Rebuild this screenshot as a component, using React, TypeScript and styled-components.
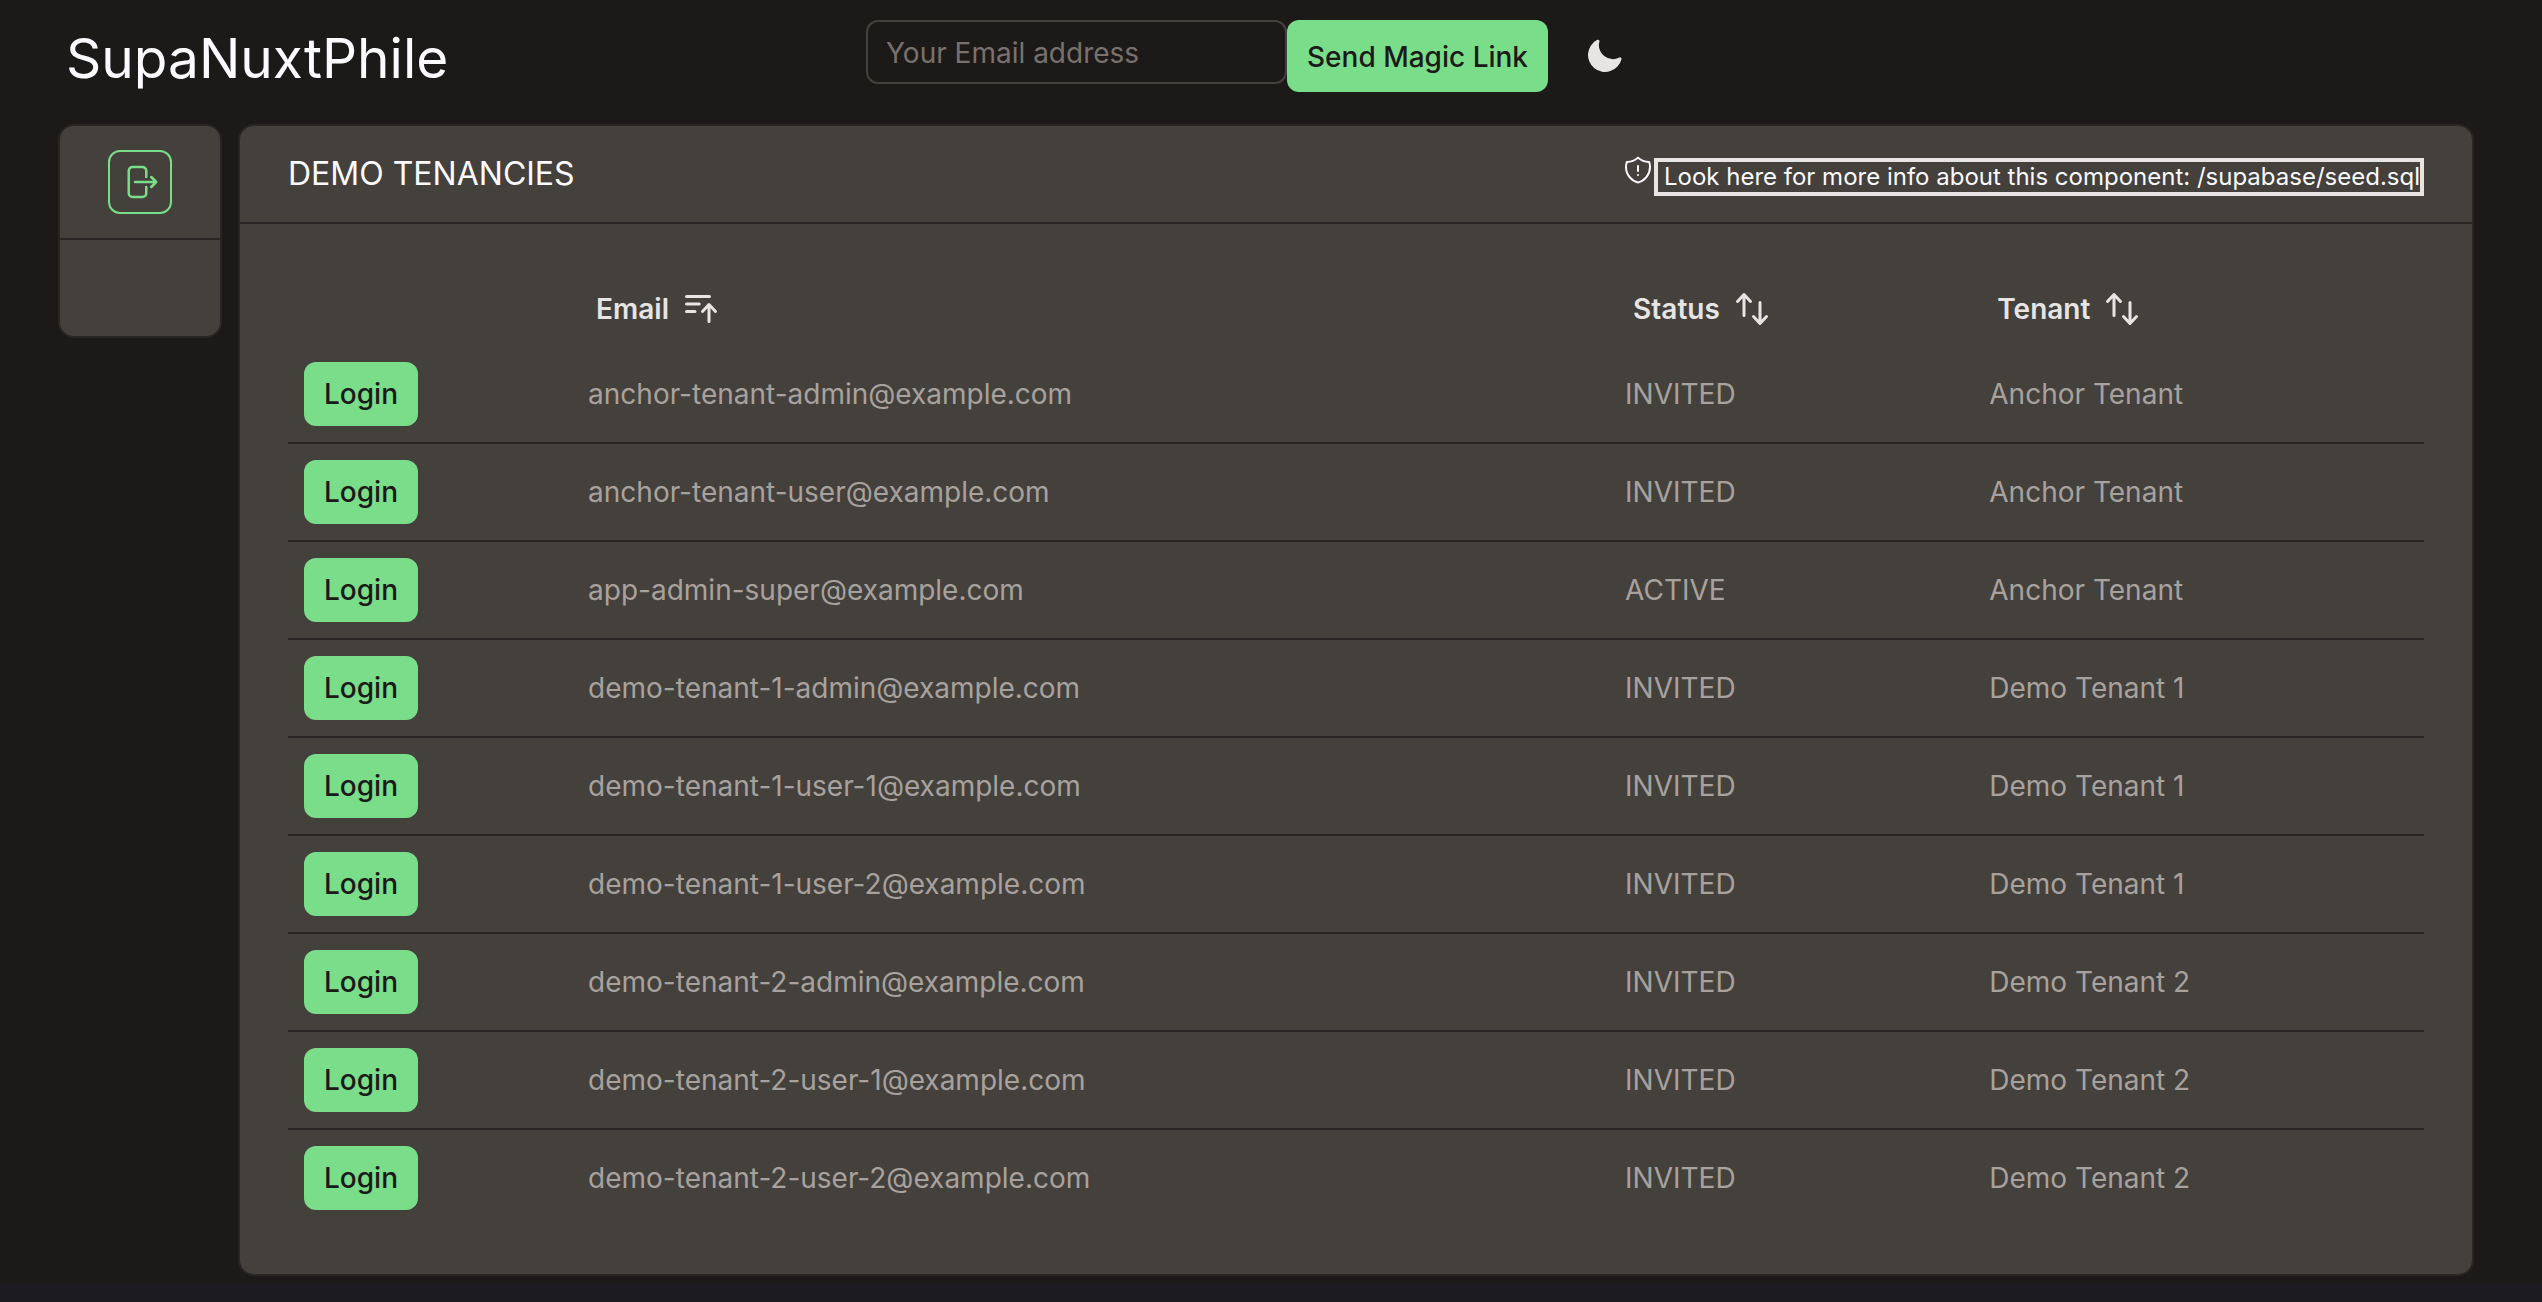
import React from 'react';
import styled, { createGlobalStyle } from 'styled-components';
import {
  HiMiniArrowsUpDown,
  HiMiniBarsArrowUp,
  HiMiniMoon,
  HiOutlineArrowRightOnRectangle,
  HiOutlineShieldExclamation,
} from 'react-icons/hi2';

const color = {
  page: '#1c1b22',
  base: '#1c1a18',
  card: '#44403c',
  line: '#292524',
  green: '#7add8a',
  white: '#fafaff',
  light: '#e7e5e4',
  muted: '#a8a29e',
  dim: '#78716c',
};

const GlobalStyle = createGlobalStyle`
  *, *::before, *::after { box-sizing: border-box; }
  body {
    margin: 0;
    background: ${color.page};
    color: ${color.white};
    font-family: Inter, "Liberation Sans", sans-serif;
    font-size: 28px;
    line-height: 40px;
  }
  button, input { font: inherit; margin: 0; }
  button { cursor: pointer; }
  h1, h2, p { margin: 0; font-weight: 400; }
`;

const Page = styled.div`
  background: ${color.base};
  padding: 20px 68px 8px 58px;
`;

const TopBar = styled.header`
  display: grid;
  grid-template-columns: 1fr 2fr;
  column-gap: 4px;
  margin-bottom: 32px;
`;

const Brand = styled.h1`
  padding: 4px 8px 0;
  font-size: 55px;
  line-height: 68px;
`;

const LoginForm = styled.form`
  display: flex;
  align-items: flex-start;
`;

const EmailInput = styled.input`
  width: 421px;
  height: 64px;
  padding: 2px 18px 0;
  border: 2px solid ${color.card};
  border-radius: 12px;
  background: transparent;
  color: ${color.white};
  &::placeholder { color: ${color.dim}; opacity: 1; }
`;

const SolidButton = styled.button<{ $tall?: boolean }>`
  display: block;
  height: ${(p) => (p.$tall ? 72 : 64)}px;
  padding: ${(p) => (p.$tall ? '2px 20px 0' : '0 20px')};
  border: 0;
  border-radius: 12px;
  background: ${color.green};
  color: ${color.base};
  font-weight: 500;
  white-space: nowrap;
`;

const IconButton = styled.button`
  display: flex;
  align-items: center;
  height: 72px;
  padding: 0 16px;
  margin-left: 20px;
  border: 0;
  background: transparent;
  color: ${color.light};
`;

const Columns = styled.div`
  display: grid;
  grid-template-columns: 164px 1fr;
  column-gap: 16px;
  align-items: start;
`;

const Card = styled.section`
  border: 2px solid ${color.line};
  border-radius: 16px;
  background: ${color.card};
`;

const CardHeader = styled.div<{ $center?: boolean }>`
  display: flex;
  align-items: center;
  justify-content: ${(p) => (p.$center ? 'center' : 'space-between')};
  padding: ${(p) => (p.$center ? '24px' : '24px 48px')};
  border-bottom: 2px solid ${color.line};
`;

const CardBody = styled.div`
  padding: 48px;
`;

const OutlineButton = styled.button`
  display: flex;
  padding: 10px;
  border: 2px solid ${color.green};
  border-radius: 12px;
  background: transparent;
  color: ${color.green};
`;

const CardTitle = styled.h2`
  font-size: 32px;
  line-height: 48px;
`;

const Info = styled.p`
  display: flex;
  align-items: flex-start;
  padding-top: 2px;
  font-size: 24px;
  line-height: 30px;
`;

const InfoText = styled.span`
  margin-top: 4px;
  padding-left: 6px;
  border: 4px solid ${color.light};
`;

const Table = styled.table`
  width: 100%;
  table-layout: fixed;
  border-collapse: separate;
  border-spacing: 0;
`;

const Col = styled.col<{ $share: number }>`
  width: ${(p) => p.$share}%;
`;

const HeadCell = styled.th`
  height: 74px;
  padding: 0 24px;
  text-align: left;
`;

const SortButton = styled.button`
  display: flex;
  align-items: center;
  gap: 12px;
  padding: 0;
  border: 0;
  background: transparent;
  color: ${color.light};
  font-weight: 600;
`;

const Row = styled.tr`
  & + & > td { border-top: 2px solid ${color.line}; }
`;

const Cell = styled.td`
  padding: 16px;
  color: ${color.muted};
  white-space: nowrap;
`;

const rows = [
  ['anchor-tenant-admin@example.com', 'INVITED', 'Anchor Tenant'],
  ['anchor-tenant-user@example.com', 'INVITED', 'Anchor Tenant'],
  ['app-admin-super@example.com', 'ACTIVE', 'Anchor Tenant'],
  ['demo-tenant-1-admin@example.com', 'INVITED', 'Demo Tenant 1'],
  ['demo-tenant-1-user-1@example.com', 'INVITED', 'Demo Tenant 1'],
  ['demo-tenant-1-user-2@example.com', 'INVITED', 'Demo Tenant 1'],
  ['demo-tenant-2-admin@example.com', 'INVITED', 'Demo Tenant 2'],
  ['demo-tenant-2-user-1@example.com', 'INVITED', 'Demo Tenant 2'],
  ['demo-tenant-2-user-2@example.com', 'INVITED', 'Demo Tenant 2'],
];

const headings = [
  { label: 'Email', Icon: HiMiniBarsArrowUp },
  { label: 'Status', Icon: HiMiniArrowsUpDown },
  { label: 'Tenant', Icon: HiMiniArrowsUpDown },
];

export default function App() {
  return (
    <>
      <GlobalStyle />
      <Page>
        <TopBar>
          <Brand>SupaNuxtPhile</Brand>
          <LoginForm onSubmit={(e) => e.preventDefault()}>
            <EmailInput type="email" aria-label="Email" placeholder="Your Email address" />
            <SolidButton $tall type="submit">Send Magic Link</SolidButton>
            <IconButton type="button" aria-label="Toggle dark mode">
              <HiMiniMoon size={40} />
            </IconButton>
          </LoginForm>
        </TopBar>
        <Columns>
          <Card as="nav">
            <CardHeader $center>
              <OutlineButton type="button" aria-label="Sign in">
                <HiOutlineArrowRightOnRectangle size={40} />
              </OutlineButton>
            </CardHeader>
            <CardBody />
          </Card>
          <Card>
            <CardHeader>
              <CardTitle>DEMO TENANCIES</CardTitle>
              <Info>
                <HiOutlineShieldExclamation size={32} />
                <InfoText>Look here for more info about this component: /supabase/seed.sql</InfoText>
              </Info>
            </CardHeader>
            <CardBody>
              <Table>
                <colgroup>
                  <Col $share={13.3} />
                  <Col $share={48.55} />
                  <Col $share={17.05} />
                  <Col $share={21.1} />
                </colgroup>
                <thead>
                  <tr>
                    <HeadCell as="td" />
                    {headings.map(({ label, Icon }) => (
                      <HeadCell key={label} scope="col">
                        <SortButton type="button">
                          {label}
                          <Icon size={40} />
                        </SortButton>
                      </HeadCell>
                    ))}
                  </tr>
                </thead>
                <tbody>
                  {rows.map(([email, status, tenant]) => (
                    <Row key={email}>
                      <Cell>
                        <SolidButton type="button">Login</SolidButton>
                      </Cell>
                      <Cell>{email}</Cell>
                      <Cell>{status}</Cell>
                      <Cell>{tenant}</Cell>
                    </Row>
                  ))}
                </tbody>
              </Table>
            </CardBody>
          </Card>
        </Columns>
      </Page>
    </>
  );
}
